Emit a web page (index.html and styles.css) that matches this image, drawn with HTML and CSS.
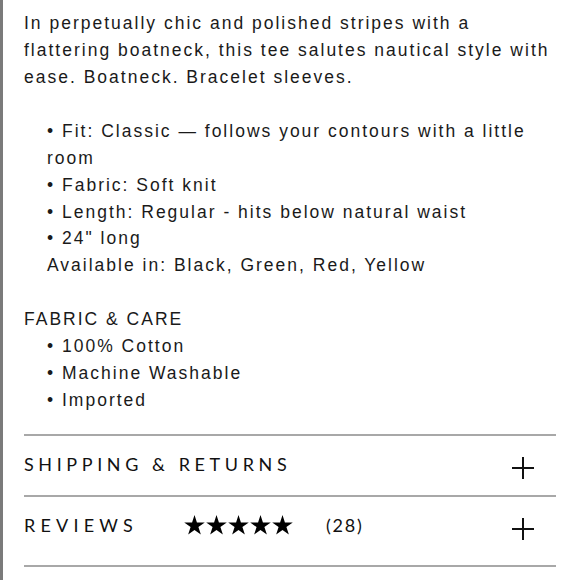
FILE: index.html
```html
<!DOCTYPE html>
<html>
<head>
<meta charset="utf-8">
<link rel="stylesheet" href="styles.css">
</head>
<body>
<div class="page">
  <div class="desc">
    <p>In perpetually chic and polished stripes with a flattering boatneck, this tee salutes nautical style with ease. Boatneck. Bracelet sleeves.</p>
    <div class="indent">
      <div>• Fit: Classic — follows your contours with a little room</div>
      <div>• Fabric: Soft knit</div>
      <div>• Length: Regular - hits below natural waist</div>
      <div>• 24" long</div>
      <div>Available in: Black, Green, Red, Yellow</div>
    </div>
    <p class="care-title">FABRIC &amp; CARE</p>
    <div class="indent">
      <div>• 100% Cotton</div>
      <div>• Machine Washable</div>
      <div>• Imported</div>
    </div>
  </div>
  <div class="accordion">
    <div class="row row-ship">
      <span class="heading">SHIPPING &amp; RETURNS</span>
      <svg class="plus" width="22" height="22" viewBox="0 0 22 22"><path d="M11 0V22M0 11H22" stroke="#111" stroke-width="2" fill="none"/></svg>
    </div>
    <div class="row row-reviews">
      <span class="heading heading-reviews">REVIEWS</span>
      <span class="stars">
        <svg width="21" height="20" viewBox="0 0 24 23"><polygon points="12,0 14.8,8.6 23.8,8.6 16.5,13.9 19.3,22.5 12,17.2 4.7,22.5 7.5,13.9 0.2,8.6 9.2,8.6" fill="#000"/></svg>
        <svg width="21" height="20" viewBox="0 0 24 23"><polygon points="12,0 14.8,8.6 23.8,8.6 16.5,13.9 19.3,22.5 12,17.2 4.7,22.5 7.5,13.9 0.2,8.6 9.2,8.6" fill="#000"/></svg>
        <svg width="21" height="20" viewBox="0 0 24 23"><polygon points="12,0 14.8,8.6 23.8,8.6 16.5,13.9 19.3,22.5 12,17.2 4.7,22.5 7.5,13.9 0.2,8.6 9.2,8.6" fill="#000"/></svg>
        <svg width="21" height="20" viewBox="0 0 24 23"><polygon points="12,0 14.8,8.6 23.8,8.6 16.5,13.9 19.3,22.5 12,17.2 4.7,22.5 7.5,13.9 0.2,8.6 9.2,8.6" fill="#000"/></svg>
        <svg width="21" height="20" viewBox="0 0 24 23"><polygon points="12,0 14.8,8.6 23.8,8.6 16.5,13.9 19.3,22.5 12,17.2 4.7,22.5 7.5,13.9 0.2,8.6 9.2,8.6" fill="#000"/></svg>
      </span>
      <span class="count">(28)</span>
      <svg class="plus" width="22" height="22" viewBox="0 0 22 22"><path d="M11 0V22M0 11H22" stroke="#111" stroke-width="2" fill="none"/></svg>
    </div>
  </div>
</div>
</body>
</html>
```

FILE: styles.css
```css
html, body {
  margin: 0;
  padding: 0;
  background: #fff;
}

.page {
  border-left: 3px solid #7a7a7a;
  min-height: 580px;
  box-sizing: border-box;
  padding: 10px 24px 0 21px;
}

.desc {
  font-family: "Liberation Sans", Arial, sans-serif;
  font-size: 17.5px;
  line-height: 26.93px;
  letter-spacing: 2px;
  color: #1a1a1a;
}

.desc p {
  margin: 0 0 26.93px 0;
}

.desc p.care-title {
  margin: 0;
}

.indent {
  padding-left: 23px;
  margin-bottom: 26.93px;
}

.indent:last-child {
  margin-bottom: 0;
}

.accordion {
  margin-top: 20px;
  border-top: 2px solid #a8a8a8;
}

.row {
  display: flex;
  align-items: flex-start;
  box-sizing: border-box;
  padding-top: 16px;
  border-bottom: 2px solid #a8a8a8;
  font-family: "Lato", "Liberation Sans", sans-serif;
  color: #111;
  line-height: 24px;
}

.row-ship {
  height: 61px;
}

.row-reviews {
  height: 70px;
}

.heading {
  font-size: 18px;
  letter-spacing: 4.6px;
}

.heading-reviews {
  letter-spacing: 5.2px;
}

.stars {
  display: flex;
  gap: 1px;
  margin-left: 46px;
  margin-top: 2px;
}

.count {
  margin-left: 33px;
  font-size: 18px;
  letter-spacing: 1.8px;
}

.plus {
  margin-left: auto;
  margin-right: 22px;
  margin-top: 5px;
}
```
